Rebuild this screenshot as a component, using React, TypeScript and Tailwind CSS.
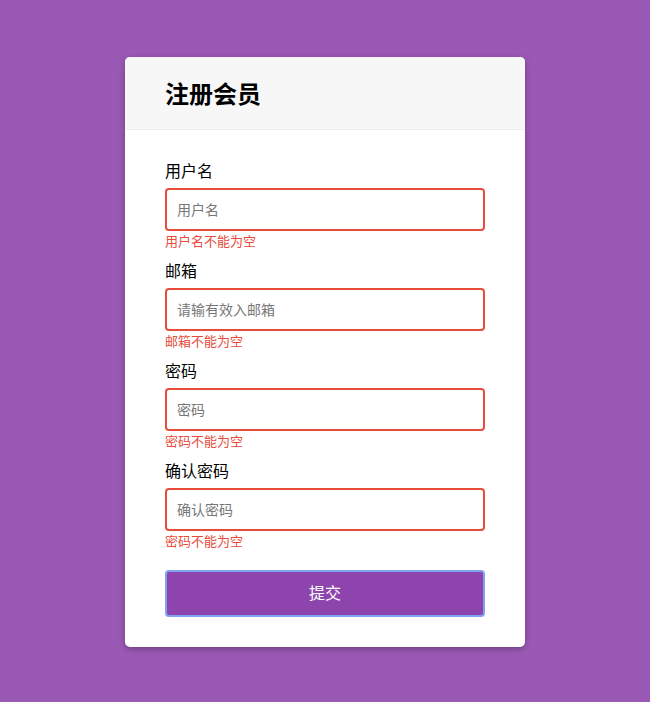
const fields = [
  { label: "用户名", placeholder: "用户名", error: "用户名不能为空" },
  { label: "邮箱", placeholder: "请输有效入邮箱", error: "邮箱不能为空" },
  { label: "密码", placeholder: "密码", error: "密码不能为空" },
  { label: "确认密码", placeholder: "确认密码", error: "密码不能为空" },
];

export default function App() {
  return (
    <div
      className="min-h-[702px] w-full bg-[#9b59b6] pt-[57px]"
      style={{ fontFamily: '"Liberation Sans", "Noto Sans CJK SC", sans-serif' }}
    >
      <div className="mx-auto w-[400px] overflow-hidden rounded-[5px] bg-white shadow-[0_2px_6px_rgba(0,0,0,0.3)]">
        {/* 标题 */}
        <div className="flex h-[73px] items-center border-b border-[#eeeeee] bg-[#f7f7f7] px-10 pt-[3px]">
          <h2 className="text-[24px] font-bold text-black">注册会员</h2>
        </div>

        <form className="px-10 pt-[30px] pb-[30px]" onSubmit={(e) => e.preventDefault()}>
          {fields.map((f) => (
            <div key={f.label} className="mb-[9px]">
              <label className="block h-6 text-[16px] leading-6 text-black">{f.label}</label>
              <input
                placeholder={f.placeholder}
                className="mt-1 block h-[43px] w-full rounded-[4px] border-2 border-[#e74c3c] px-[10px] text-[14px] text-black outline-none placeholder:text-[#777777]"
              />
              <small className="mt-[2px] block h-[18px] text-[13px] leading-[18px] text-[#e74c3c]">
                {f.error}
              </small>
            </div>
          ))}
          <button
            type="submit"
            className="mt-[19px] block h-[47px] w-full rounded-[4px] border-2 border-[#7fa3f0] bg-[#8e44ad] text-[16px] text-white"
          >
            提交
          </button>
        </form>
      </div>
    </div>
  );
}
